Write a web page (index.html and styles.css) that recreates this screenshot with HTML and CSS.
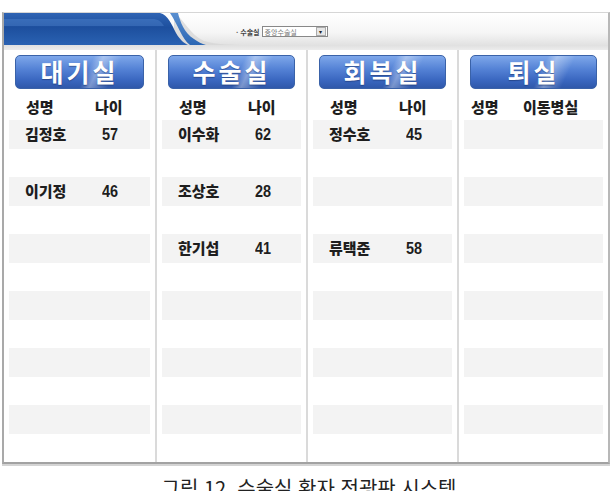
FILE: index.html
```html
<!DOCTYPE html>
<html lang="ko">
<head>
    <meta charset="UTF-8">
    <meta name="viewport" content="width=device-width, initial-scale=1.0">
    <title>수술실 환자 전광판</title>
    <link rel="stylesheet" href="styles.css">
</head>
<body>
    <div class="board">
        <div class="topbar">
            <svg class="topbar-art" width="604" height="32" viewBox="0 0 604 32">
                <defs>
                    <linearGradient id="bgGrad" x1="0" y1="0" x2="0" y2="1">
                        <stop offset="0" stop-color="#ffffff"/>
                        <stop offset="0.6" stop-color="#f6f6f6"/>
                        <stop offset="1" stop-color="#e2e2e2"/>
                    </linearGradient>
                    <linearGradient id="blueGrad" x1="0" y1="0" x2="0" y2="1">
                        <stop offset="0" stop-color="#2f64b4"/>
                        <stop offset="0.45" stop-color="#1d4f9e"/>
                        <stop offset="1" stop-color="#2a62b2"/>
                    </linearGradient>
                    <linearGradient id="sliverGrad" x1="0" y1="0" x2="0" y2="1">
                        <stop offset="0" stop-color="#5a8fd0"/>
                        <stop offset="1" stop-color="#2c67b4"/>
                    </linearGradient>
                </defs>
                <rect width="604" height="32" fill="url(#bgGrad)"/>
                <!-- soft shadow under the swoosh -->
                <path d="M170 0 C180 6 186 22 200 28 C212 32 230 32 250 32 H170 Z" fill="#d4d4d4" opacity="0.7"/>
                <!-- light blue sliver -->
                <path d="M166 0 H174 C176 8 180 20 190 26 C194 29 198 31 202 32 H186 C178 26 174 12 166 0 Z" fill="url(#sliverGrad)"/>
                <!-- main banner -->
                <path d="M0 0 H156 C164 2 168 12 172 20 C176 27 180 30 184 32 H0 Z" fill="url(#blueGrad)"/>
                <path d="M0 6 H150 C156 7 158 10 160 13 H0 Z" fill="#5b8fd6" opacity="0.35"/>
            </svg>
            <div class="room-select">
                <span class="room-label">· 수술실</span>
                <span class="select-box"><span class="select-text">중앙수술실</span><span class="select-arrow">▾</span></span>
            </div>
        </div>
        <div class="top-gap"></div>
        <div class="columns">
            <div class="col">
                <div class="badge">대기실</div>
                <div class="row head"><span>성명</span><span>나이</span></div>
                <div class="rows">
                    <div class="row"><span>김정호</span><span class="num">57</span></div>
                    <div class="row"></div>
                    <div class="row"><span>이기정</span><span class="num">46</span></div>
                    <div class="row"></div>
                    <div class="row"></div>
                    <div class="row"></div>
                    <div class="row"></div>
                    <div class="row"></div>
                    <div class="row"></div>
                    <div class="row"></div>
                    <div class="row"></div>
                    <div class="row"></div>
                </div>
            </div>
            <div class="col">
                <div class="badge">수술실</div>
                <div class="row head"><span>성명</span><span>나이</span></div>
                <div class="rows">
                    <div class="row"><span>이수화</span><span class="num">62</span></div>
                    <div class="row"></div>
                    <div class="row"><span>조상호</span><span class="num">28</span></div>
                    <div class="row"></div>
                    <div class="row"><span>한기섭</span><span class="num">41</span></div>
                    <div class="row"></div>
                    <div class="row"></div>
                    <div class="row"></div>
                    <div class="row"></div>
                    <div class="row"></div>
                    <div class="row"></div>
                    <div class="row"></div>
                </div>
            </div>
            <div class="col">
                <div class="badge">회복실</div>
                <div class="row head"><span>성명</span><span>나이</span></div>
                <div class="rows">
                    <div class="row"><span>정수호</span><span class="num">45</span></div>
                    <div class="row"></div>
                    <div class="row"></div>
                    <div class="row"></div>
                    <div class="row"><span>류택준</span><span class="num">58</span></div>
                    <div class="row"></div>
                    <div class="row"></div>
                    <div class="row"></div>
                    <div class="row"></div>
                    <div class="row"></div>
                    <div class="row"></div>
                    <div class="row"></div>
                </div>
            </div>
            <div class="col col-out">
                <div class="badge">퇴실</div>
                <div class="row head"><span>성명</span><span>이동병실</span></div>
                <div class="rows">
                    <div class="row"></div>
                    <div class="row"></div>
                    <div class="row"></div>
                    <div class="row"></div>
                    <div class="row"></div>
                    <div class="row"></div>
                    <div class="row"></div>
                    <div class="row"></div>
                    <div class="row"></div>
                    <div class="row"></div>
                    <div class="row"></div>
                    <div class="row"></div>
                </div>
            </div>
        </div>
    </div>
    <p class="caption">그림 12. 수술실 환자 전광판 시스템</p>
</body>
</html>
```

FILE: styles.css
```css
body {
    margin: 0;
    background: #ffffff;
    font-family: "Noto Sans CJK KR", "Noto Sans", sans-serif;
}
.board {
    margin: 12px 0 0 2px;
    width: 604px;
    border-left: 2px solid #a9a9a9;
    border-right: 2px solid #b8b8b8;
    border-top: 1px solid #d6d6d6;
    border-bottom: 2px solid #a2a2a2;
    box-shadow: 0 2px 0 #d4d4d4;
}
.topbar {
    position: relative;
    height: 32px;
}
.topbar-art {
    display: block;
}
.room-select {
    position: absolute;
    left: 232px;
    top: 13px;
    display: flex;
    align-items: center;
    gap: 2px;
    font-size: 7px;
    color: #555;
}
.room-label {
    font-weight: bold;
    color: #444;
}
.select-box {
    display: flex;
    align-items: center;
    justify-content: space-between;
    width: 62px;
    height: 9px;
    border: 1px solid #888;
    background: #fff;
    padding-left: 2px;
}
.select-text {
    color: #777;
}
.select-arrow {
    width: 8px;
    height: 7px;
    margin-right: 1px;
    background: #e6e6e6;
    border: 1px solid #aaa;
    font-size: 6px;
    line-height: 7px;
    text-align: center;
    color: #222;
}
.top-gap {
    height: 5px;
    background: linear-gradient(#e0e0e0, #ececec);
}
.columns {
    display: grid;
    grid-template-columns: repeat(4, 1fr);
}
.col + .col {
    border-left: 2px solid #dadada;
}
.badge {
    margin: 5px 11px 0;
    height: 34px;
    border-radius: 5px;
    border: 1px solid #3a62a8;
    box-sizing: border-box;
    background:
        linear-gradient(115deg, rgba(255,255,255,0) 55%, rgba(255,255,255,0.35) 62%, rgba(255,255,255,0) 75%),
        linear-gradient(180deg, #7ea7ea 0%, #5583d6 40%, #3a67c0 75%, #2f58aa 100%);
    color: #ffffff;
    font-size: 25px;
    font-weight: bold;
    letter-spacing: 3px;
    line-height: 31px;
    text-align: center;
    text-shadow: 0 1px 1px rgba(20, 40, 90, 0.5);
}
.row {
    display: grid;
    grid-template-columns: 77px 1fr;
    align-items: baseline;
    align-content: center;
    height: 28.5px;
    margin: 0 5px;
    padding-left: 16px;
    font-size: 15px;
    font-weight: 900;
    color: #1e1e1e;
}
.row.head {
    height: 31px;
    padding-top: 4px;
    box-sizing: border-box;
    grid-template-columns: 69px 1fr;
    padding-left: 17px;
}
.rows .row:nth-child(odd) {
    background: #f3f3f3;
}
.num {
    font-family: "Liberation Sans", Arial, sans-serif;
    font-size: 17px;
    font-weight: bold;
    transform: scaleX(0.85);
    transform-origin: left center;
}
.col-out .row {
    padding-left: 7px;
}
.col-out .row.head {
    grid-template-columns: 52px 1fr;
    padding-left: 7px;
}
.caption {
    margin: 9px 0 0;
    text-align: center;
    font-size: 20px;
    color: #222;
    padding-left: 3px;
}
```
